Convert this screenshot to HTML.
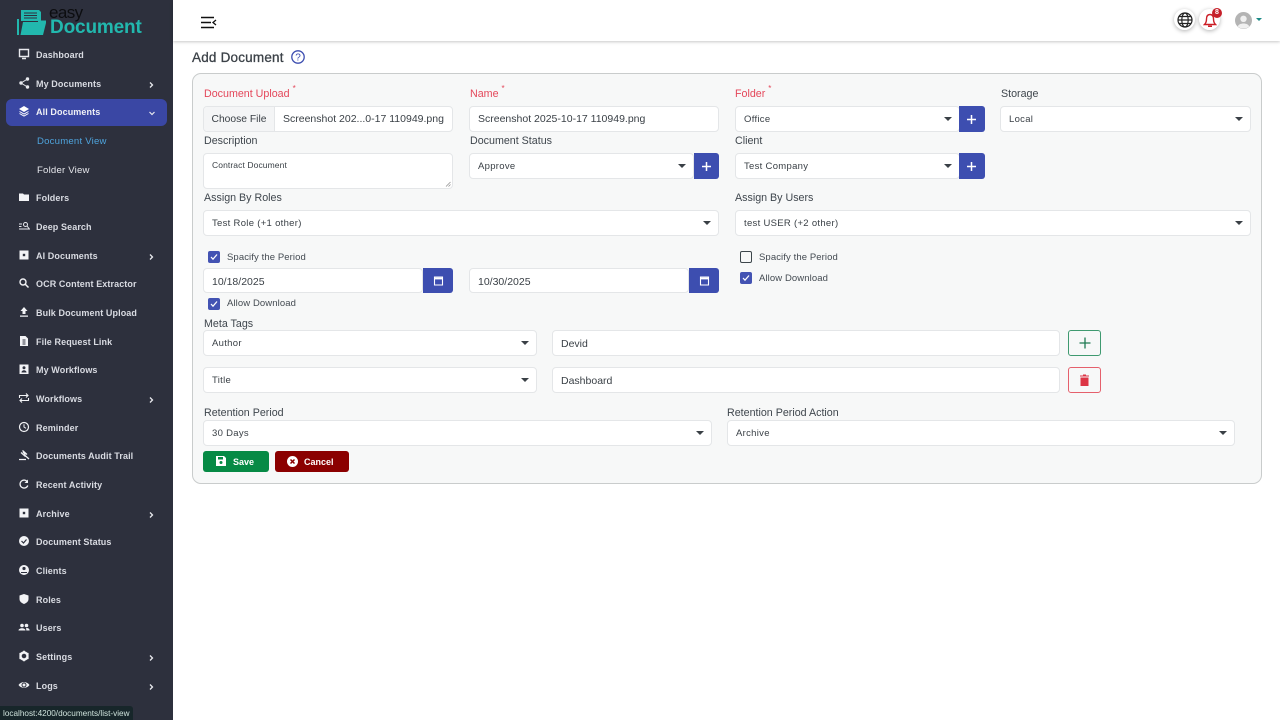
<!DOCTYPE html>
<html><head><meta charset="utf-8"><style>
*{box-sizing:border-box}
html,body{margin:0;padding:0;width:1280px;height:720px;overflow:hidden;background:#fff;font-family:"Liberation Sans",sans-serif;color:#343a40}
.a{position:absolute}
#side{position:absolute;left:0;top:0;width:173px;height:720px;background:#2d303d}
.m{position:absolute;left:36px;font-size:9px;font-weight:bold;letter-spacing:.1px;color:#d9dbe2;line-height:12px;white-space:nowrap}
.i{position:absolute;left:18px;width:12px;height:12px}
.ch{position:absolute;left:149px;font-size:0;margin-top:-1px}
.ch svg,.i{display:block}
.l{position:absolute;font-size:10.7px;line-height:14px;color:#3f464d;white-space:nowrap}
.r{color:#e4475a}
.r sup{font-size:8px;line-height:0;position:relative;top:-1px;margin-left:3px;vertical-align:super}
.f{position:absolute;background:#fff;border:1px solid #e4e6e8;border-radius:4px;height:26px;font-size:10.5px;line-height:25px;padding-left:8px;color:#3a4046;white-space:nowrap}
.s{font-size:9.5px;letter-spacing:.3px;line-height:25px}
.s:after{content:"";position:absolute;right:7px;top:10px;border-left:4px solid transparent;border-right:4px solid transparent;border-top:4px solid #3a4046}
.b{position:absolute;width:26px;height:26px;background:#3d4eb0;border-radius:0 3px 3px 0;color:#fff}
.b svg{position:absolute;left:7px;top:8px}
.c{position:absolute;width:12px;height:12px;background:#4353b3;border-radius:2px}
.c svg{position:absolute;left:1px;top:1px}
.t{position:absolute;font-size:9.5px;letter-spacing:.1px;line-height:12px;color:#444b52;white-space:nowrap;margin-top:1px}
</style></head><body>

<div id="side">
<svg class="a" style="left:16px;top:9px" width="32" height="27" viewBox="0 0 32 27"><path d="M1 10h2v16H1z M5 1h18l2 2v9H5z" fill="#22b8ae"/><path d="M8 4h13M8 6.500h13M8 9h13" stroke="#2d303d" stroke-width="1"/><path d="M7 13h15v-1.500h8v2.500l-3 12H4.500z" fill="#22b8ae"/></svg>
<div class="a" style="left:49px;top:4px;font-size:17px;line-height:18px;color:#0c0d10;letter-spacing:-.6px">easy</div>
<div class="a" style="left:50px;top:18px;font-size:19px;line-height:20px;font-weight:bold;color:#22b8ae;letter-spacing:-.15px">Document</div>

<div class="a" style="left:6px;top:99px;width:161px;height:27px;background:#3a47a4;border-radius:6px"></div>

<svg class="i" style="top:48px" viewBox="0 0 12 12"><path d="M1.500 1.500h9v7h-9z M4 10.500h4" fill="none" stroke="#e8e9ee" stroke-width="1.400"/></svg><div class="m" style="top:49px">Dashboard</div>
<svg class="i" style="top:77px" viewBox="0 0 12 12"><path d="M9.500 2 3 6l6.500 4" fill="none" stroke="#e8e9ee"/><circle cx="3" cy="6" r="1.700" fill="#e8e9ee"/><circle cx="9.500" cy="2" r="1.700" fill="#e8e9ee"/><circle cx="9.500" cy="10" r="1.700" fill="#e8e9ee"/></svg><div class="m" style="top:78px">My Documents</div>
<svg class="i" style="top:105px" viewBox="0 0 12 12"><path d="M6 1l5 3-5 3-5-3z" fill="#fff"/><path d="M1.500 6.500 6 9l4.500-2.500M1.500 8.500 6 11l4.500-2.500" fill="none" stroke="#fff"/></svg><div class="m" style="top:106px;color:#f0f1f6">All Documents</div>
<div class="a" style="left:37px;top:136px;font-size:9.600px;line-height:12px;letter-spacing:.2px;color:#4ea3dc">Document View</div>
<div class="a" style="left:37px;top:165px;font-size:9.600px;line-height:12px;letter-spacing:.2px;color:#e6e7ec">Folder View</div>
<svg class="i" style="top:191px" viewBox="0 0 12 12"><path d="M1 2.500h4l1 1h5v6.500H1z" fill="#f2f3f6"/></svg><div class="m" style="top:192px">Folders</div>
<svg class="i" style="top:220px" viewBox="0 0 12 12"><path d="M1 4h3M1 6.500h2.500M1 9h11" stroke="#e8e9ee" fill="none"/><circle cx="7.500" cy="4.500" r="2" fill="none" stroke="#e8e9ee"/><path d="M9 6l2 2.500" stroke="#e8e9ee"/></svg><div class="m" style="top:221px">Deep Search</div>
<svg class="i" style="top:249px" viewBox="0 0 12 12"><path d="M1.500 1.500h9v9h-9z" fill="#f2f3f6"/><rect x="4.800" y="4.800" width="2.400" height="2.400" fill="#2d303d"/></svg><div class="m" style="top:250px">AI Documents</div>
<svg class="i" style="top:277px" viewBox="0 0 12 12"><circle cx="5" cy="5" r="3" fill="none" stroke="#f2f3f6" stroke-width="1.400"/><path d="M7 7l3.500 3.500" stroke="#f2f3f6" stroke-width="1.500"/></svg><div class="m" style="top:278px">OCR Content Extractor</div>
<svg class="i" style="top:306px" viewBox="0 0 12 12"><path d="M6 1l3.500 4H7.500v3h-3V5H2.500z M2 9.500h8v1.300H2z" fill="#f2f3f6"/></svg><div class="m" style="top:307px">Bulk Document Upload</div>
<svg class="i" style="top:335px" viewBox="0 0 12 12"><path d="M2 1h5.500L10 3.500V11H2z" fill="#f2f3f6"/><path d="M4.500 5h3M4.500 7h3M4.500 9h3" stroke="#2d303d"/></svg><div class="m" style="top:336px">File Request Link</div>
<svg class="i" style="top:363px" viewBox="0 0 12 12"><path d="M1.500 1.500h9v9.500h-9z" fill="#f2f3f6"/><circle cx="6" cy="4.800" r="1.500" fill="#2d303d"/><path d="M3.500 9.500c0-3 5-3 5 0z" fill="#2d303d"/></svg><div class="m" style="top:364px">My Workflows</div>
<svg class="i" style="top:392px" viewBox="0 0 12 12"><path d="M1.500 6V3.500h8M8 1.500l2 2-2 2M10.500 6v2.500h-8M4 6.500l-2 2 2 2" fill="none" stroke="#f2f3f6" stroke-width="1.100"/></svg><div class="m" style="top:393px">Workflows</div>
<svg class="i" style="top:421px" viewBox="0 0 12 12"><circle cx="6" cy="6" r="4.500" fill="none" stroke="#f2f3f6" stroke-width="1.200"/><path d="M6 3.200V6l2 1.300" fill="none" stroke="#f2f3f6"/></svg><div class="m" style="top:422px">Reminder</div>
<svg class="i" style="top:449px" viewBox="0 0 12 12"><path d="M4.500 1.500l4.500 4M3 3.500l4.500 4M5 3l2.500 2.500M6 5.500l5 4.500M1 10.500h7" fill="none" stroke="#f2f3f6" stroke-width="1.300"/></svg><div class="m" style="top:450px">Documents Audit Trail</div>
<svg class="i" style="top:478px" viewBox="0 0 12 12"><path d="M9.500 4a4 4 0 1 0 .3 3.500" fill="none" stroke="#f2f3f6" stroke-width="1.300"/><path d="M10 1.500v3.500H6.500z" fill="#f2f3f6"/></svg><div class="m" style="top:479px">Recent Activity</div>
<svg class="i" style="top:507px" viewBox="0 0 12 12"><path d="M1.500 1.500h9v9h-9z" fill="#f2f3f6"/><rect x="4.800" y="4.800" width="2.400" height="2.400" fill="#2d303d"/></svg><div class="m" style="top:508px">Archive</div>
<svg class="i" style="top:535px" viewBox="0 0 12 12"><circle cx="6" cy="6" r="5" fill="#f2f3f6"/><path d="M3.500 6l2 2 3-3.500" fill="none" stroke="#2d303d" stroke-width="1.200"/></svg><div class="m" style="top:536px">Document Status</div>
<svg class="i" style="top:564px" viewBox="0 0 12 12"><circle cx="6" cy="6" r="5" fill="#f2f3f6"/><circle cx="6" cy="4.500" r="1.600" fill="#2d303d"/><path d="M3 8h6v1H3z" fill="#2d303d"/></svg><div class="m" style="top:565px">Clients</div>
<svg class="i" style="top:593px" viewBox="0 0 12 12"><path d="M6 1l4.500 1.500V6c0 2.500-2 4-4.500 5C3.500 10 1.500 8.500 1.500 6V2.500z" fill="#f2f3f6"/></svg><div class="m" style="top:594px">Roles</div>
<svg class="i" style="top:621px" viewBox="0 0 12 12"><circle cx="4" cy="4.500" r="1.800" fill="#f2f3f6"/><circle cx="8.500" cy="4.500" r="1.800" fill="#f2f3f6"/><path d="M0.500 9.500c0-3 7-3 7 0zM8.300 9.500h3.300c0-2-1.500-2.500-3.500-2.500z" fill="#f2f3f6"/></svg><div class="m" style="top:622px">Users</div>
<svg class="i" style="top:650px" viewBox="0 0 12 12"><circle cx="6" cy="6" r="3.500" fill="none" stroke="#f2f3f6" stroke-width="2.400"/><path d="M6 .8v2M6 9.200v2M1.500 3.400l1.700 1M8.800 7.600l1.700 1M1.500 8.600l1.700-1M8.800 4.400l1.700-1" stroke="#f2f3f6" stroke-width="1.800"/></svg><div class="m" style="top:651px">Settings</div>
<svg class="i" style="top:679px" viewBox="0 0 12 12"><path d="M.5 6C3 2.200 9 2.200 11.500 6 9 9.800 3 9.800.5 6z" fill="#f2f3f6"/><circle cx="6" cy="6" r="2" fill="none" stroke="#2d303d"/></svg><div class="m" style="top:680px">Logs</div>

<svg class="ch" style="top:83px" width="5" height="6" viewBox="0 0 5 6"><path d="M1 .5 3.500 3 1 5.500" fill="none" stroke="#e8e9ee" stroke-width="1.300"/></svg>
<svg class="ch" style="top:112px" width="6" height="5" viewBox="0 0 6 5"><path d="M.5 1 3 3.500 5.500 1" fill="none" stroke="#e8e9ee" stroke-width="1.200"/></svg>
<svg class="ch" style="top:255px" width="5" height="6" viewBox="0 0 5 6"><path d="M1 .5 3.500 3 1 5.500" fill="none" stroke="#e8e9ee" stroke-width="1.300"/></svg>
<svg class="ch" style="top:398px" width="5" height="6" viewBox="0 0 5 6"><path d="M1 .5 3.500 3 1 5.500" fill="none" stroke="#e8e9ee" stroke-width="1.300"/></svg>
<svg class="ch" style="top:513px" width="5" height="6" viewBox="0 0 5 6"><path d="M1 .5 3.500 3 1 5.500" fill="none" stroke="#e8e9ee" stroke-width="1.300"/></svg>
<svg class="ch" style="top:656px" width="5" height="6" viewBox="0 0 5 6"><path d="M1 .5 3.500 3 1 5.500" fill="none" stroke="#e8e9ee" stroke-width="1.300"/></svg>
<svg class="ch" style="top:685px" width="5" height="6" viewBox="0 0 5 6"><path d="M1 .5 3.500 3 1 5.500" fill="none" stroke="#e8e9ee" stroke-width="1.300"/></svg>
</div>
<div class="a" style="left:0;top:706px;width:133px;height:14px;background:#17262a;border-radius:0 3px 0 0;color:#cfe3dc;font-size:8.200px;line-height:15px;padding-left:3px;white-space:nowrap">localhost:4200/documents/list-view</div>

<div class="a" style="left:173px;top:0;width:1107px;height:41px;background:#fff;box-shadow:0 1px 3px rgba(0,0,0,.22)"></div>
<svg class="a" style="left:200px;top:16px" width="17" height="13" viewBox="0 0 17 13"><path d="M1 1.500h13M1 6.500h10M1 11.500h13" stroke="#111" stroke-width="1.600"/><path d="M16 4 13 6.500 16 9" fill="none" stroke="#111" stroke-width="1.300"/></svg>

<div class="a" style="left:1174px;top:9px;width:21px;height:21px;border-radius:50%;background:#fff;box-shadow:0 1px 4px rgba(0,0,0,.3)"></div>
<svg class="a" style="left:1177px;top:12px" width="16" height="16" viewBox="0 0 16 16" fill="none" stroke="#222" stroke-width="1.200"><circle cx="8" cy="8" r="7"/><ellipse cx="8" cy="8" rx="3.200" ry="7"/><path d="M1 8h14M2 4.500h12M2 11.500h12"/></svg>
<div class="a" style="left:1199px;top:9px;width:21px;height:21px;border-radius:50%;background:#fff;box-shadow:0 1px 4px rgba(0,0,0,.3)"></div>
<svg class="a" style="left:1203px;top:13px" width="14" height="15" viewBox="0 0 14 15"><path d="M7 1.500C4.500 1.500 3.500 3.500 3.500 6c0 3-1 4.500-2 5.500h11c-1-1-2-2.500-2-5.500 0-2.500-1-4.500-3.500-4.500z" fill="none" stroke="#cc1f27" stroke-width="1.400"/><path d="M5 12.500h4v1.500H5z" fill="#cc1f27"/></svg>
<div class="a" style="left:1212px;top:8px;width:10px;height:10px;border-radius:50%;background:#c6202a;color:#fff;font-size:7px;font-weight:bold;line-height:10px;text-align:center">8</div>
<svg class="a" style="left:1235px;top:12px" width="17" height="17" viewBox="0 0 17 17"><circle cx="8.500" cy="8.500" r="8.500" fill="#b4b4b4"/><circle cx="8.500" cy="6.800" r="3.200" fill="#f0f0f0"/><path d="M2.800 14.500c1-4 10.400-4 11.400 0-3 2.800-8.400 2.800-11.400 0z" fill="#f0f0f0"/></svg>
<div class="a" style="left:1256px;top:18px;border-left:3px solid transparent;border-right:3px solid transparent;border-top:3px solid #1b8a86"></div>

<div class="a" style="left:192px;top:50px;font-size:13.500px;line-height:16px;color:#3c4248;letter-spacing:.2px;-webkit-text-stroke:.3px #3c4248">Add Document</div>
<svg class="a" style="left:291px;top:50px" width="14" height="14" viewBox="0 0 14 14"><circle cx="7" cy="7" r="6.200" fill="none" stroke="#3d4eb0" stroke-width="1.300"/><text x="7" y="10.500" font-size="10" font-family="Liberation Sans" text-anchor="middle" fill="#3d4eb0">?</text></svg>

<div class="a" style="left:192px;top:73px;width:1070px;height:411px;background:#f7f8f8;border:1px solid #c9cccc;border-radius:9px"></div>

<div class="l r" style="left:204px;top:87px">Document Upload<sup>*</sup></div>
<div class="l r" style="left:470px;top:87px">Name<sup>*</sup></div>
<div class="l r" style="left:735px;top:87px">Folder<sup>*</sup></div>
<div class="l" style="left:1001px;top:87px">Storage</div>

<div class="f" style="left:203px;top:106px;width:250px;padding-left:0;overflow:hidden"><span class="a" style="left:0;top:0;width:71px;height:24px;background:#f4f5f6;border-right:1px solid #e4e6e8;text-align:center;font-size:10.300px">Choose File</span><span class="a" style="left:79px;top:0">Screenshot 202...0-17 110949.png</span></div>
<div class="f" style="left:469px;top:106px;width:250px">Screenshot 2025-10-17 110949.png</div>
<div class="f s" style="left:735px;top:106px;width:225px">Office</div>
<div class="b" style="left:959px;top:106px"><svg width="11" height="11" viewBox="0 0 11 11"><path d="M5.500 1v9M1 5.500h9" stroke="#fff" stroke-width="1.500"/></svg></div>
<div class="f s" style="left:1000px;top:106px;width:251px">Local</div>

<div class="l" style="left:204px;top:134px">Description</div>
<div class="l" style="left:470px;top:134px">Document Status</div>
<div class="l" style="left:735px;top:134px">Client</div>

<div class="f" style="left:203px;top:153px;width:250px;height:36px;font-size:8.500px;line-height:22px;letter-spacing:.1px">Contract Document<svg class="a" style="right:1px;bottom:1px" width="6" height="6" viewBox="0 0 6 6"><path d="M1 5.500 5.500 1M3.500 5.500l2-2" stroke="#888" stroke-width=".7"/></svg></div>
<div class="f s" style="left:469px;top:153px;width:225px">Approve</div>
<div class="b" style="left:694px;top:153px;width:25px"><svg width="11" height="11" viewBox="0 0 11 11"><path d="M5.500 1v9M1 5.500h9" stroke="#fff" stroke-width="1.500"/></svg></div>
<div class="f s" style="left:735px;top:153px;width:225px">Test Company</div>
<div class="b" style="left:959px;top:153px"><svg width="11" height="11" viewBox="0 0 11 11"><path d="M5.500 1v9M1 5.500h9" stroke="#fff" stroke-width="1.500"/></svg></div>

<div class="l" style="left:204px;top:191px">Assign By Roles</div>
<div class="l" style="left:735px;top:191px">Assign By Users</div>
<div class="f s" style="left:203px;top:210px;width:516px">Test Role (+1 other)</div>
<div class="f s" style="left:735px;top:210px;width:516px">test USER (+2 other)</div>

<div class="c" style="left:208px;top:251px"><svg width="10" height="10" viewBox="0 0 10 10"><path d="M2 5l2 2.200L8 2.500" fill="none" stroke="#fff" stroke-width="1.200"/></svg></div>
<div class="t" style="left:227px;top:251px">Spacify the Period</div>
<div class="f" style="left:203px;top:268px;width:220px;height:25px;line-height:27px">10/18/2025</div>
<div class="b" style="left:423px;top:268px;width:30px;height:25px"><svg style="left:10px;top:7px" width="11" height="11" viewBox="0 0 11 11"><path d="M1.500 2h8v8h-8z" fill="none" stroke="#fff" stroke-width="1.100"/><path d="M1.500 3.500h8" stroke="#fff" stroke-width="1.800"/></svg></div>
<div class="f" style="left:469px;top:268px;width:220px;height:25px;line-height:27px">10/30/2025</div>
<div class="b" style="left:689px;top:268px;width:30px;height:25px"><svg style="left:10px;top:7px" width="11" height="11" viewBox="0 0 11 11"><path d="M1.500 2h8v8h-8z" fill="none" stroke="#fff" stroke-width="1.100"/><path d="M1.500 3.500h8" stroke="#fff" stroke-width="1.800"/></svg></div>
<div class="c" style="left:208px;top:298px"><svg width="10" height="10" viewBox="0 0 10 10"><path d="M2 5l2 2.200L8 2.500" fill="none" stroke="#fff" stroke-width="1.200"/></svg></div>
<div class="t" style="left:227px;top:297px">Allow Download</div>

<div class="a" style="left:740px;top:251px;width:12px;height:12px;border:1.500px solid #3d464b;border-radius:2px"></div>
<div class="t" style="left:759px;top:251px">Spacify the Period</div>
<div class="c" style="left:740px;top:272px"><svg width="10" height="10" viewBox="0 0 10 10"><path d="M2 5l2 2.200L8 2.500" fill="none" stroke="#fff" stroke-width="1.200"/></svg></div>
<div class="t" style="left:759px;top:272px">Allow Download</div>

<div class="l" style="left:204px;top:317px">Meta Tags</div>
<div class="f s" style="left:203px;top:330px;width:334px">Author</div>
<div class="f" style="left:552px;top:330px;width:508px;line-height:27px">Devid</div>
<div class="a" style="left:1068px;top:330px;width:33px;height:26px;border:1px solid #3f9a70;border-radius:3px"><svg class="a" style="left:10px;top:6px" width="12" height="12" viewBox="0 0 12 12"><path d="M6 .5v11M.5 6h11" stroke="#1f7a52" stroke-width="1.300"/></svg></div>
<div class="f s" style="left:203px;top:367px;width:334px">Title</div>
<div class="f" style="left:552px;top:367px;width:508px;line-height:27px">Dashboard</div>
<div class="a" style="left:1068px;top:367px;width:33px;height:26px;border:1px solid #e5606c;border-radius:3px"><svg class="a" style="left:10px;top:6px" width="11" height="13" viewBox="0 0 11 13"><path d="M1 1.500h9v1H1zM4 .5h3v1H4zM1.500 3.500h8V12h-8z" fill="#dc3545"/></svg></div>

<div class="l" style="left:204px;top:406px">Retention Period</div>
<div class="l" style="left:727px;top:406px">Retention Period Action</div>
<div class="f s" style="left:203px;top:420px;width:509px">30 Days</div>
<div class="f s" style="left:727px;top:420px;width:508px">Archive</div>

<div class="a" style="left:203px;top:451px;width:66px;height:21px;background:#068a45;border-radius:3px;color:#fff;font-size:9px;font-weight:bold;line-height:22px;padding-left:30px">Save</div>
<svg class="a" style="left:216px;top:456px" width="10" height="10" viewBox="0 0 10 10"><path d="M0 0h8l2 2v8H0z" fill="#fff"/><rect x="2" y="1" width="5" height="2.500" fill="#068a45"/><circle cx="5" cy="6.500" r="1.500" fill="#068a45"/></svg>
<div class="a" style="left:275px;top:451px;width:74px;height:21px;background:#8b0000;border-radius:3px;color:#fff;font-size:9px;font-weight:bold;line-height:22px;padding-left:29px">Cancel</div>
<svg class="a" style="left:287px;top:456px" width="11" height="11" viewBox="0 0 11 11"><circle cx="5.500" cy="5.500" r="5.500" fill="#fff"/><path d="M3.500 3.500l4 4M7.500 3.500l-4 4" stroke="#8b0000" stroke-width="1.500"/></svg>
</body></html>
